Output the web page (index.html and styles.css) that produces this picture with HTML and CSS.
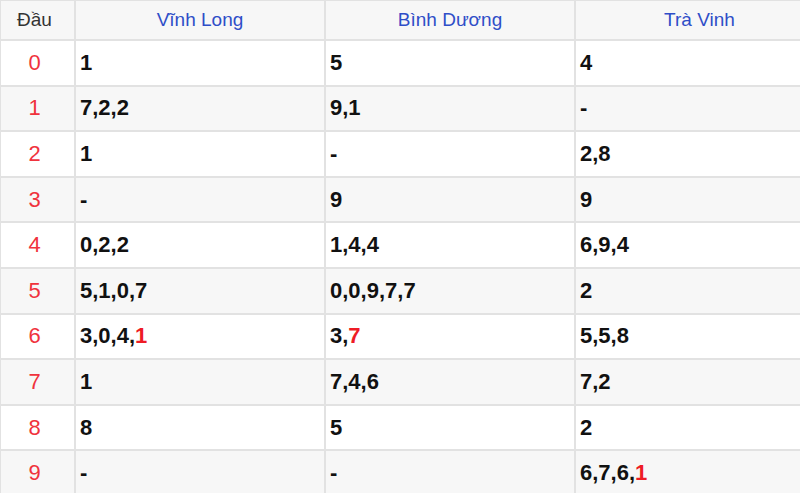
FILE: index.html
```html
<!DOCTYPE html>
<html lang="vi">
<head>
<meta charset="utf-8">
<link rel="stylesheet" href="styles.css">
</head>
<body>
<table class="loto">
  <thead>
    <tr><th class="c-head">Đầu</th><th>Vĩnh Long</th><th>Bình Dương</th><th>Trà Vinh</th></tr>
  </thead>
  <tbody>
    <tr><td class="c-head">0</td><td>1</td><td>5</td><td>4</td></tr>
    <tr><td class="c-head">1</td><td>7,2,2</td><td>9,1</td><td>-</td></tr>
    <tr><td class="c-head">2</td><td>1</td><td>-</td><td>2,8</td></tr>
    <tr><td class="c-head">3</td><td>-</td><td>9</td><td>9</td></tr>
    <tr><td class="c-head">4</td><td>0,2,2</td><td>1,4,4</td><td>6,9,4</td></tr>
    <tr><td class="c-head">5</td><td>5,1,0,7</td><td>0,0,9,7,7</td><td>2</td></tr>
    <tr><td class="c-head">6</td><td>3,0,4,<span class="hl">1</span></td><td>3,<span class="hl">7</span></td><td>5,5,8</td></tr>
    <tr><td class="c-head">7</td><td>1</td><td>7,4,6</td><td>7,2</td></tr>
    <tr><td class="c-head">8</td><td>8</td><td>5</td><td>2</td></tr>
    <tr><td class="c-head">9</td><td>-</td><td>-</td><td>6,7,6,<span class="hl">1</span></td></tr>
  </tbody>
</table>
</body>
</html>
```
FILE: styles.css
```css
html, body {
  margin: 0;
  padding: 0;
  background: #fff;
  overflow: hidden;
}
body {
  width: 800px;
  height: 493px;
  font-family: "Liberation Sans", Arial, sans-serif;
}
.loto {
  border-collapse: collapse;
  table-layout: fixed;
  width: 826px;
  margin-top: -1px;
  margin-left: -1px;
}
.loto th, .loto td {
  border: 2px solid #e2e2e2;
  padding: 0 4px;
}
.loto th {
  height: 38px;
  font-size: 19px;
  font-weight: normal;
  color: #2f4ec8;
  text-align: center;
  background: #f7f7f7;
}
.loto th.c-head {
  color: #333;
  padding: 0 7px 0 1px;
}
.loto th:nth-child(1) { width: 65px; }
.loto th:nth-child(2) { width: 240px; }
.loto th:nth-child(3) { width: 240px; }
.loto td {
  height: 43.6px;
  font-size: 22px;
  font-weight: bold;
  color: #111;
  text-align: left;
}
.loto td.c-head {
  text-align: center;
  font-weight: normal;
  color: #f0333d;
  padding: 0 7px 0 1px;
}
.loto tbody tr:nth-child(even) td {
  background: #f7f7f7;
}
.hl {
  color: #ee1c25;
}
```
